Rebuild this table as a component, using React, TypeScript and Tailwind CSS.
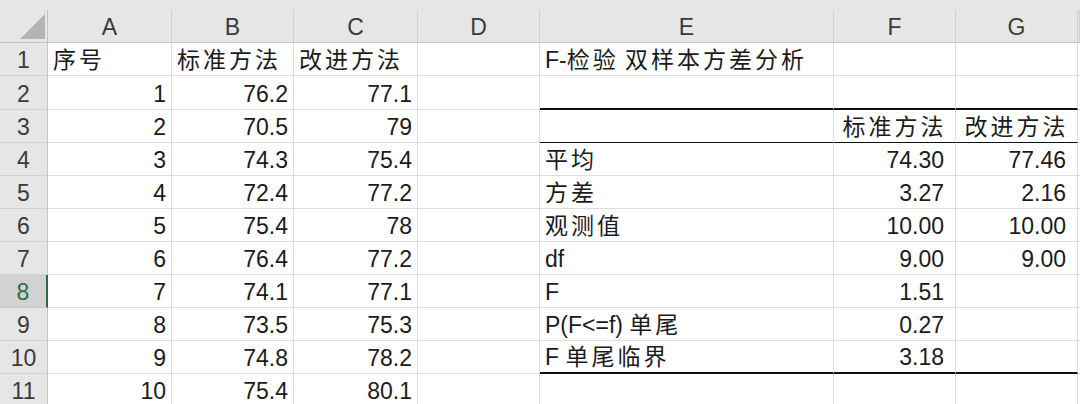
import type { ReactNode } from 'react';

const COLS = 'grid grid-cols-[48px_124px_122px_124px_122px_294px_122px_122px_1fr]';
const LETTERS = ['A', 'B', 'C', 'D', 'E', 'F', 'G', ''];

type Cell = { v?: string; a?: 'l' | 'r' | 'c'; b?: 'thick' | 'thin'; pad?: boolean };

// splits text so that Chinese runs get the wider spacing of the sheet font
function txt(s: string): ReactNode[] {
  return s.split(/([\u4e00-\u9fff]+)/).filter(Boolean).map((part, i) =>
    /[\u4e00-\u9fff]/.test(part) ? (
      <span key={i} className="tracking-[3px]">
        {part}
      </span>
    ) : (
      <span key={i}>{part}</span>
    ),
  );
}

const n = (v: string): Cell => ({ v, a: 'r' });
const f = (v: string, b?: Cell['b']): Cell => ({ v, a: 'r', pad: true, b });

const rows: { h: string; cells: Cell[] }[] = [
  {
    h: 'h-[33px]',
    cells: [{ v: '序号' }, { v: '标准方法' }, { v: '改进方法' }, {}, { v: 'F-检验 双样本方差分析' }, {}, {}, {}],
  },
  {
    h: 'h-[34px]',
    cells: [n('1'), n('76.2'), n('77.1'), {}, { b: 'thick' }, { b: 'thick' }, { b: 'thick' }, {}],
  },
  {
    h: 'h-[33px]',
    cells: [
      n('2'),
      n('70.5'),
      n('79'),
      {},
      { b: 'thin' },
      { v: '标准方法', a: 'c', b: 'thin' },
      { v: '改进方法', a: 'c', b: 'thin' },
      {},
    ],
  },
  { h: 'h-[33px]', cells: [n('3'), n('74.3'), n('75.4'), {}, { v: '平均' }, f('74.30'), f('77.46'), {}] },
  { h: 'h-[33px]', cells: [n('4'), n('72.4'), n('77.2'), {}, { v: '方差' }, f('3.27'), f('2.16'), {}] },
  { h: 'h-[33px]', cells: [n('5'), n('75.4'), n('78'), {}, { v: '观测值' }, f('10.00'), f('10.00'), {}] },
  { h: 'h-[33px]', cells: [n('6'), n('76.4'), n('77.2'), {}, { v: 'df' }, f('9.00'), f('9.00'), {}] },
  { h: 'h-[33px]', cells: [n('7'), n('74.1'), n('77.1'), {}, { v: 'F' }, f('1.51'), {}, {}] },
  { h: 'h-[33px]', cells: [n('8'), n('73.5'), n('75.3'), {}, { v: 'P(F<=f) 单尾' }, f('0.27'), {}, {}] },
  {
    h: 'h-[33px]',
    cells: [n('9'), n('74.8'), n('78.2'), {}, { v: 'F 单尾临界', b: 'thick' }, f('3.18', 'thick'), { b: 'thick' }, {}],
  },
  { h: 'h-[33px]', cells: [n('10'), n('75.4'), n('80.1'), {}, {}, {}, {}, {}] },
];

function SheetCell({ c }: { c: Cell }) {
  const border =
    c.b === 'thick'
      ? 'border-b-2 border-b-[#111]'
      : c.b === 'thin'
        ? 'border-b border-b-[#111]'
        : 'border-b border-b-[#dcdcdc]';
  const align = c.a === 'r' ? 'justify-end' : c.a === 'c' ? 'justify-center' : 'justify-start';
  const pad = c.pad ? 'pr-[11px] pl-[5px]' : 'px-[5px]';
  return (
    <div
      className={`flex items-end overflow-visible whitespace-pre border-r border-r-[#dcdcdc] pb-[2px] ${border} ${align} ${pad}`}
    >
      {c.v && <span>{txt(c.v)}</span>}
    </div>
  );
}

export default function App() {
  return (
    <div className="w-[1080px] h-[404px] overflow-hidden bg-white font-['Liberation_Sans','Noto_Sans_CJK_SC',sans-serif] text-[23px] leading-[26px] text-[#1b1b1b]">
      <div className="h-[10px] bg-[#e6e6e6]" />
      <div className={`${COLS} h-[33px] bg-[#e6e6e6] text-[#3a3a3a]`}>
        <div className="relative border-r border-b border-[#c4c4c4]">
          <svg className="absolute left-[20px] top-[4px]" width="25" height="25" viewBox="0 0 25 25">
            <polygon points="25,0 25,25 0,25" fill="#b4b4b4" />
          </svg>
        </div>
        {LETTERS.map((l, i) => (
          <div
            key={i}
            className="flex items-end justify-center pb-[2px] border-r border-r-[#d0d0d0] border-b border-b-[#c4c4c4]"
          >
            {l}
          </div>
        ))}
      </div>
      {rows.map((r, ri) => {
        const sel = ri === 7;
        return (
          <div key={ri} className={`${COLS} ${r.h}`}>
            <div
              className={
                sel
                  ? 'flex items-end justify-center pb-[2px] bg-[#d2d2d2] text-[#217346] border-b border-b-[#c8c8c8] border-r-2 border-r-[#217346]'
                  : 'flex items-end justify-center pb-[2px] bg-[#e6e6e6] text-[#3a3a3a] border-b border-b-[#d0d0d0] border-r border-r-[#c4c4c4]'
              }
            >
              {ri + 1}
            </div>
            {r.cells.map((c, ci) => (
              <SheetCell key={ci} c={c} />
            ))}
          </div>
        );
      })}
    </div>
  );
}
